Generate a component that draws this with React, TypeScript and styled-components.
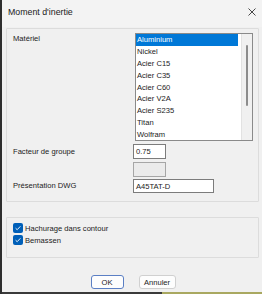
import React from "react";
import styled, { createGlobalStyle } from "styled-components";

const Global = createGlobalStyle`
  html, body { margin: 0; padding: 0; background: #f0f0f0; }
  body { font-family: "Liberation Sans", Arial, sans-serif; }
  * { box-sizing: border-box; }
`;

const Window = styled.div`
  width: 262px;
  height: 294px;
  display: flex;
  flex-direction: column;
  background: #f0f0f0;
  border-left: 2px solid #2e2e2e;
  color: #1b1b1b;
  font-size: 7.6px;
  overflow: hidden;
`;

const TitleBar = styled.div`
  height: 27px;
  flex: none;
  display: flex;
  align-items: center;
  justify-content: space-between;
  padding: 0 6px 4px 6px;
  background: #f3f3f3;
  font-size: 8.8px;
  color: #1a1a1a;
`;

const Body = styled.div`
  display: flex;
  flex-direction: column;
  padding: 1px 3px 0 4px;
`;

const Group = styled.div<{ $h: number; $mt?: number }>`
  height: ${(p) => p.$h}px;
  margin-top: ${(p) => p.$mt ?? 0}px;
  border: 1px solid #dcdcdc;
  border-radius: 1px;
`;

const FormGrid = styled.div`
  display: grid;
  grid-template-columns: 120px 1fr;
  padding: 4px 0 0 6px;
`;

const Label = styled.div<{ $pt?: number }>`
  padding-top: ${(p) => p.$pt ?? 0}px;
  line-height: 12px;
  white-space: nowrap;
`;

const ListBox = styled.div`
  margin-left: 2px;
  width: 118px;
  height: 108px;
  border: 1px solid #8a8a8a;
  background: #fff;
  display: flex;
  overflow: hidden;
`;

const ListItems = styled.div`
  flex: 1;
  padding: 0 3px 0 0;
`;

const Item = styled.div<{ $sel?: boolean }>`
  height: 11.875px;
  line-height: 11.875px;
  padding-left: 1px;
  background: ${(p) => (p.$sel ? "#0078d7" : "transparent")};
  color: ${(p) => (p.$sel ? "#fff" : "#1b1b1b")};
  white-space: nowrap;
`;

const ScrollTrack = styled.div`
  width: 11px;
  background: #f0f0f0;
  border-left: 1px solid #e2e2e2;
  padding-top: 11px;
  display: flex;
  justify-content: center;
`;

const Thumb = styled.div`
  width: 2px;
  height: 61px;
  border-radius: 1px;
  background: #8c8c8c;
`;

const Input = styled.div<{ $w: number; $h: number; $mt: number }>`
  width: ${(p) => p.$w}px;
  height: ${(p) => p.$h}px;
  margin-top: ${(p) => p.$mt}px;
  border: 1px solid #7c7c7c;
  background: #fff;
  padding-left: 2px;
  display: flex;
  align-items: center;
  white-space: nowrap;
`;

const DisabledBox = styled.div`
  width: 33px;
  height: 15px;
  margin-top: 3px;
  border: 1px solid #a6a6a6;
  background: #ebebeb;
`;

const CheckList = styled.div`
  display: flex;
  flex-direction: column;
  padding: 4px 0 0 6px;
`;

const CheckRow = styled.label`
  display: flex;
  align-items: center;
  gap: 2px;
  height: 12px;
  white-space: nowrap;
`;

const Box = styled.span`
  width: 10px;
  height: 10px;
  border-radius: 2px;
  background: #005fb8;
  display: flex;
  align-items: center;
  justify-content: center;
`;

const Buttons = styled.div`
  display: flex;
  justify-content: center;
  gap: 15px;
  margin-top: 17px;
  padding-left: 1px;
`;

const Button = styled.div<{ $w: number; $primary?: boolean }>`
  width: ${(p) => p.$w}px;
  height: 14px;
  border: 1px solid ${(p) => (p.$primary ? "#5b7fc4" : "#d0d0d0")};
  border-radius: 3px;
  background: #fdfdfd;
  display: flex;
  align-items: center;
  justify-content: center;
  font-size: 7.6px;
`;

const BottomStrip = styled.div`
  margin-top: auto;
  height: 2px;
  flex: none;
  background: linear-gradient(to right, #3a3a3a 0, #3a3a3a 160px, #a9a860 160px);
`;

const materials = [
  "Aluminium",
  "Nickel",
  "Acier C15",
  "Acier C35",
  "Acier C60",
  "Acier V2A",
  "Acier S235",
  "Titan",
  "Wolfram",
];

const Check = () => (
  <Box>
    <svg width="8" height="8" viewBox="0 0 8 8">
      <path d="M1.6 4.2 L3.2 5.7 L6.4 2.3" fill="none" stroke="#fff" strokeWidth="0.9" />
    </svg>
  </Box>
);

export default function App() {
  return (
    <>
      <Global />
      <Window>
        <TitleBar>
          <span>Moment d'inertie</span>
          <svg width="8" height="8" viewBox="0 0 8 8">
            <path d="M0.5 0.5 L7.5 7.5 M7.5 0.5 L0.5 7.5" stroke="#333" strokeWidth="0.9" />
          </svg>
        </TitleBar>
        <Body>
          <Group $h={174}>
            <FormGrid>
              <Label $pt={0}>Matériel</Label>
              <ListBox>
                <ListItems>
                  {materials.map((m, i) => (
                    <Item key={m} $sel={i === 0}>
                      {m}
                    </Item>
                  ))}
                </ListItems>
                <ScrollTrack>
                  <Thumb />
                </ScrollTrack>
              </ListBox>
              <Label $pt={5}>Facteur de groupe</Label>
              <Input $w={33} $h={15} $mt={3}>
                0.75
              </Input>
              <div />
              <DisabledBox />
              <Label $pt={3}>Présentation DWG</Label>
              <Input $w={81} $h={14} $mt={2}>
                A45TAT-D
              </Input>
            </FormGrid>
          </Group>
          <Group $h={41} $mt={15}>
            <CheckList>
              <CheckRow>
                <Check />
                Hachurage dans contour
              </CheckRow>
              <CheckRow>
                <Check />
                Bemassen
              </CheckRow>
            </CheckList>
          </Group>
          <Buttons>
            <Button $w={33} $primary>
              OK
            </Button>
            <Button $w={37}>Annuler</Button>
          </Buttons>
        </Body>
        <BottomStrip />
      </Window>
    </>
  );
}
